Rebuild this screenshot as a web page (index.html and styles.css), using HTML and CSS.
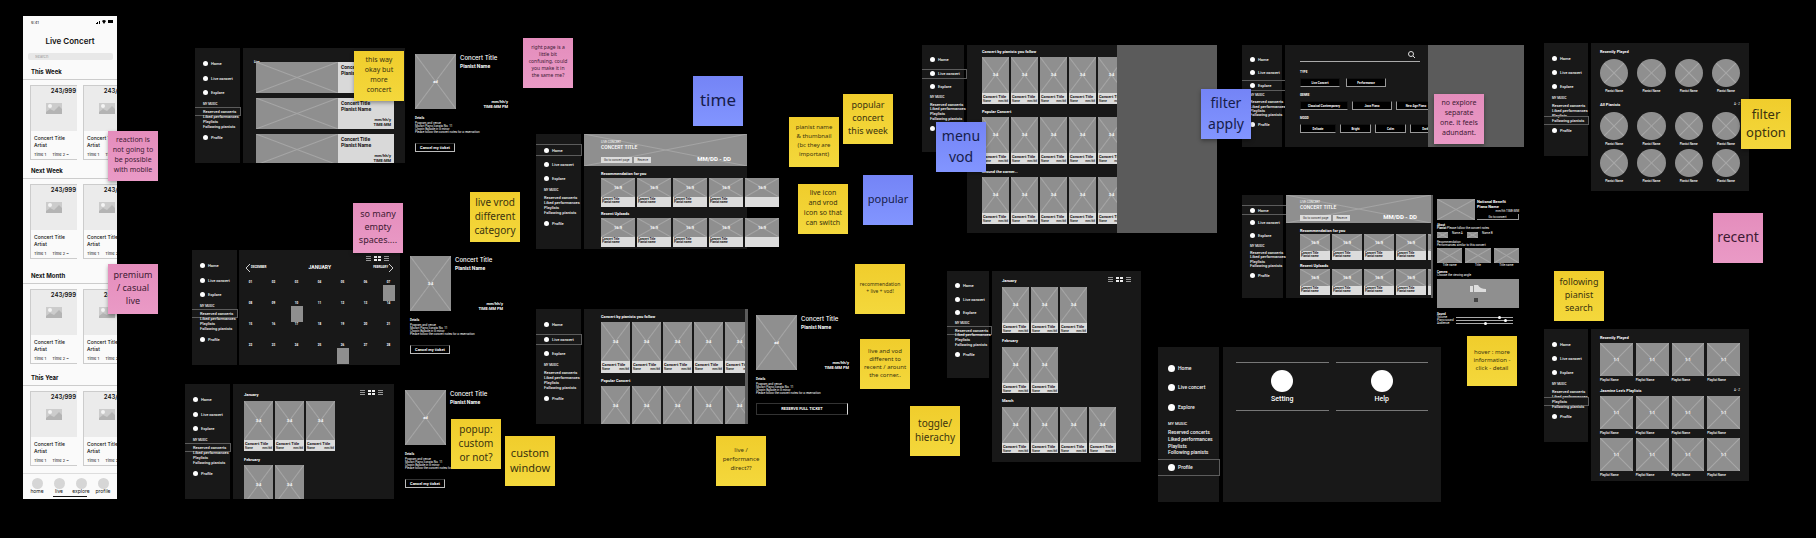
FILE: index.html
```html
<!DOCTYPE html>
<html lang="en">
<head>
<meta charset="utf-8">
<title>Live Concert wireframes</title>
<link rel="stylesheet" href="styles.css">
</head>
<body>
<svg class="defs" aria-hidden="true">
  <symbol id="pic" viewBox="0 0 16 11"><path fill="#ccc" d="M0 0h16v11H0z"/><circle cx="4" cy="3" r="2" fill="#f4f4f4"/><path fill="#b4b4b4" d="M0 9l4-3 4 2 5-5 3 3v5H0z"/></symbol>
  <symbol id="views" viewBox="0 0 23 5"><path fill="#999" d="M0 0h5v1H0zM0 2h5v1H0zM0 4h5v1H0zM18 0h5v1h-5zM18 2h5v1h-5zM18 4h5v1h-5z"/><path fill="#eee" d="M8 0h3v2H8zM12 0h3v2h-3zM8 3h3v2H8zM12 3h3v2h-3z"/></symbol>
</svg>
<main class="board">

<section class="phone">
  <div class="status"><span>9:41</span><svg width="17" height="4" viewBox="0 0 17 4"><path d="M0 3h1v1H0zM1 2h1v2H1zM3 1h1v3H3zM6 1q2-2 4 0L8 4zM12 0h5v3h-5z"/></svg></div>
  <h1>Live Concert</h1>
  <input class="search" type="search" placeholder="Search" aria-label="Search concerts">
  <section class="week"><h2>This Week</h2><div class="tickets">
    <article class="ticket"><div><b>243/999</b><svg><use href="#pic"/></svg></div><h3>Concert Title<br>Artist</h3><p><span>Time 1</span><span>Time 2 ~</span></p></article>
    <article class="ticket"><div><b>243/999</b><svg><use href="#pic"/></svg></div><h3>Concert Title<br>Artist</h3><p><span>Time 1</span><span>Time 2 ~</span></p></article></div></section>
  <section class="week tight"><h2>Next Week</h2><div class="tickets">
    <article class="ticket"><div><b>243/999</b><svg><use href="#pic"/></svg></div><h3>Concert Title<br>Artist</h3><p><span>Time 1</span><span>Time 2 ~</span></p></article>
    <article class="ticket"><div><b>243/999</b><svg><use href="#pic"/></svg></div><h3>Concert Title<br>Artist</h3><p><span>Time 1</span><span>Time 2 ~</span></p></article></div></section>
  <section class="week loose"><h2>Next Month</h2><div class="tickets">
    <article class="ticket"><div><b>243/999</b><svg><use href="#pic"/></svg></div><h3>Concert Title<br>Artist</h3><p><span>Time 1</span><span>Time 2 ~</span></p></article>
    <article class="ticket"><div><b>243/999</b><svg><use href="#pic"/></svg></div><h3>Concert Title<br>Artist</h3><p><span>Time 1</span><span>Time 2 ~</span></p></article></div></section>
  <section class="week"><h2>This Year</h2><div class="tickets">
    <article class="ticket"><div><b>243/999</b><svg><use href="#pic"/></svg></div><h3>Concert Title<br>Artist</h3><p><span>Time 1</span><span>Time 2 ~</span></p></article>
    <article class="ticket"><div><b>243/999</b><svg><use href="#pic"/></svg></div><h3>Concert Title<br>Artist</h3><p><span>Time 1</span><span>Time 2 ~</span></p></article></div></section>
  <nav class="tabs"><a href="#">home</a><a href="#">live</a><a href="#">explore</a><a href="#">profile</a></nav>
</section>

<section class="group list">
  <nav class="side"><a class="nav" href="#">Home</a><a class="nav" href="#">Live concert</a><a class="nav" href="#">Explore</a><small>MY MUSIC</small><a class="on" href="#">Reserved concerts</a><a href="#">Liked performances</a><a href="#">Playlists</a><a href="#">Following pianists</a><a class="nav" href="#">Profile</a></nav>
  <div class="screen">
    <h3>Live</h3>
    <article class="strip"><div class="ph"></div><div><b>Concert Title<br>Pianist Name</b><span>mm/hh/y<br>TIME:MM</span></div></article>
    <article class="strip"><div class="ph"></div><div><b>Concert Title<br>Pianist Name</b><span>mm/hh/y<br>TIME:MM</span></div></article>
    <article class="strip"><div class="ph"></div><div><b>Concert Title<br>Pianist Name</b><span>mm/hh/y<br>TIME:MM</span></div></article>
  </div>
  <aside class="detail"><div class="top"><div class="ph">ad</div><div><h2>Concert Title</h2><h3>Pianist Name</h3><span>mm/hh/y<br>TIME:MM PM</span></div></div><h4>Details</h4><p>Program and venue<br>Mozart Piano Sonata No. 11<br>Chopin Ballade in G minor<br>Please follow the concert notes for a reservation</p><button>Cancel my ticket</button></aside>
</section>

<section class="group month">
  <nav class="side"><a class="nav" href="#">Home</a><a class="nav" href="#">Live concert</a><a class="nav" href="#">Explore</a><small>MY MUSIC</small><a class="on" href="#">Reserved concerts</a><a href="#">Liked performances</a><a href="#">Playlists</a><a href="#">Following pianists</a><a class="nav" href="#">Profile</a></nav>
  <div class="screen">
    <svg class="views"><use href="#views"/></svg>
    <div class="months"><button><svg width="4" height="8" viewBox="0 0 4 8"><path d="M4 0L0 4l4 4"/></svg>DECEMBER</button><h2>JANUARY</h2><button>FEBRUARY<svg width="4" height="8" viewBox="0 0 4 8"><path d="M0 0l4 4-4 4"/></svg></button></div>
    <div class="days"><span>01</span><span>02</span><span>03</span><span>04</span><span>05</span><span>06</span><span class="ev">07</span><span>08</span><span>09</span><span class="ev">10</span><span>11</span><span>12</span><span>13</span><span>14</span><span>15</span><span>16</span><span>17</span><span>18</span><span>19</span><span>20</span><span>21</span><span>22</span><span>23</span><span>24</span><span>25</span><span class="ev">26</span><span>27</span><span>28</span></div>
  </div>
  <aside class="detail"><div class="top"><div class="ph">3:4</div><div><h2>Concert Title</h2><h3>Pianist Name</h3><span>mm/hh/y<br>TIME:MM PM</span></div></div><h4>Details</h4><p>Program and venue<br>Mozart Piano Sonata No. 11<br>Chopin Ballade in G minor<br>Please follow the concert notes for a reservation</p><button>Cancel my ticket</button></aside>
</section>

<section class="group monthly">
  <nav class="side"><a class="nav" href="#">Home</a><a class="nav" href="#">Live concert</a><a class="nav" href="#">Explore</a><small>MY MUSIC</small><a class="on" href="#">Reserved concerts</a><a href="#">Liked performances</a><a href="#">Playlists</a><a href="#">Following pianists</a><a class="nav" href="#">Profile</a></nav>
  <div class="screen">
    <header><h3>January</h3><svg class="views"><use href="#views"/></svg></header>
    <div class="row">
      <article class="card"><div class="ph">3:4</div><h4>Concert Title</h4><p><span>Name</span><span>mm/dd</span></p></article>
      <article class="card"><div class="ph">3:4</div><h4>Concert Title</h4><p><span>Name</span><span>mm/dd</span></p></article>
      <article class="card"><div class="ph">3:4</div><h4>Concert Title</h4><p><span>Name</span><span>mm/dd</span></p></article>
    </div>
    <h3>February</h3>
    <div class="row">
      <article class="card"><div class="ph">3:4</div><h4>Concert Title</h4><p><span>Name</span><span>mm/dd</span></p></article>
      <article class="card"><div class="ph">3:4</div><h4>Concert Title</h4><p><span>Name</span><span>mm/dd</span></p></article>
    </div>
  </div>
  <aside class="detail"><div class="top"><div class="ph">ad</div><div><h2>Concert Title</h2><h3>Pianist Name</h3></div></div><h4>Details</h4><p>Program and venue<br>Mozart Piano Sonata No. 11<br>Chopin Ballade in G minor<br>Please follow the concert notes for a reservation</p><button>Cancel my ticket</button></aside>
</section>

<section class="group home">
  <nav class="side"><a class="nav on" href="#">Home</a><a class="nav" href="#">Live concert</a><a class="nav" href="#">Explore</a><small>MY MUSIC</small><a href="#">Reserved concerts</a><a href="#">Liked performances</a><a href="#">Playlists</a><a href="#">Following pianists</a><a class="nav" href="#">Profile</a></nav>
  <div class="screen">
    <div class="banner"><div><small>LIVE CONCERT</small><h2>CONCERT TITLE</h2><button>Go to concert page</button><button>Reserve</button></div><b>MM/DD - DD</b></div>
    <h3>Recommendation for you</h3>
    <div class="row">
      <article class="card"><div class="ph">16:9</div><h4>Concert Title</h4><h4>Pianist name</h4></article>
      <article class="card"><div class="ph">16:9</div><h4>Concert Title</h4><h4>Pianist name</h4></article>
      <article class="card"><div class="ph">16:9</div><h4>Concert Title</h4><h4>Pianist name</h4></article>
      <article class="card"><div class="ph">16:9</div><h4>Concert Title</h4><h4>Pianist name</h4></article>
      <article class="card"><div class="ph">16:9</div></article>
    </div>
    <h3>Recent Uploads</h3>
    <div class="row">
      <article class="card"><div class="ph">16:9</div><h4>Concert Title</h4><h4>Pianist name</h4></article>
      <article class="card"><div class="ph">16:9</div><h4>Concert Title</h4><h4>Pianist name</h4></article>
      <article class="card"><div class="ph">16:9</div><h4>Concert Title</h4><h4>Pianist name</h4></article>
      <article class="card"><div class="ph">16:9</div><h4>Concert Title</h4><h4>Pianist name</h4></article>
      <article class="card"><div class="ph">16:9</div></article>
    </div>
  </div>
</section>

<section class="group live">
  <nav class="side"><a class="nav" href="#">Home</a><a class="nav on" href="#">Live concert</a><a class="nav" href="#">Explore</a><small>MY MUSIC</small><a href="#">Reserved concerts</a><a href="#">Liked performances</a><a href="#">Playlists</a><a href="#">Following pianists</a><a class="nav" href="#">Profile</a></nav>
  <div class="screen">
    <h3>Concert by pianists you follow</h3>
    <div class="row">
      <article class="card"><div class="ph">3:4</div><h4>Concert Title</h4><p><span>Name</span><span>mm/dd</span></p></article>
      <article class="card"><div class="ph">3:4</div><h4>Concert Title</h4><p><span>Name</span><span>mm/dd</span></p></article>
      <article class="card"><div class="ph">3:4</div><h4>Concert Title</h4><p><span>Name</span><span>mm/dd</span></p></article>
      <article class="card"><div class="ph">3:4</div><h4>Concert Title</h4><p><span>Name</span><span>mm/dd</span></p></article>
      <article class="card"><div class="ph">3:4</div><h4>Concert Title</h4><p><span>Name</span><span>mm/dd</span></p></article>
    </div>
    <h3>Popular Concert</h3>
    <div class="row">
      <article class="card"><div class="ph">3:4</div></article>
      <article class="card"><div class="ph">3:4</div></article>
      <article class="card"><div class="ph">3:4</div></article>
      <article class="card"><div class="ph">3:4</div></article>
      <article class="card"><div class="ph">3:4</div></article>
    </div>
  </div>
  <aside class="detail"><div class="top"><div class="ph">ad</div><div><h2>Concert Title</h2><h3>Pianist Name</h3><span>mm/hh/y<br>TIME:MM PM</span></div></div><h4>Details</h4><p>Program and venue<br>Mozart Piano Sonata No. 11<br>Chopin Ballade in G minor<br>Please follow the concert notes for a reservation</p><button>RESERVE FULL TICKET</button></aside>
</section>

<section class="group vod">
  <nav class="side"><a class="nav" href="#">Home</a><a class="nav on" href="#">Live concert</a><a class="nav" href="#">Explore</a><small>MY MUSIC</small><a href="#">Reserved concerts</a><a href="#">Liked performances</a><a href="#">Playlists</a><a href="#">Following pianists</a><a class="nav" href="#">Profile</a></nav>
  <div class="screen">
    <h3>Concert by pianists you follow</h3>
    <div class="row">
      <article class="card"><div class="ph">3:4</div><h4>Concert Title</h4><p><span>Name</span><span>mm/dd</span></p></article>
      <article class="card"><div class="ph">3:4</div><h4>Concert Title</h4><p><span>Name</span><span>mm/dd</span></p></article>
      <article class="card"><div class="ph">3:4</div><h4>Concert Title</h4><p><span>Name</span><span>mm/dd</span></p></article>
      <article class="card"><div class="ph">3:4</div><h4>Concert Title</h4><p><span>Name</span><span>mm/dd</span></p></article>
      <article class="card"><div class="ph">3:4</div><h4>Concert Title</h4><p><span>Name</span><span>mm/dd</span></p></article>
    </div>
    <h3>Popular Concert</h3>
    <div class="row">
      <article class="card"><div class="ph">3:4</div><h4>Concert Title</h4><p><span>Name</span><span>mm/dd</span></p></article>
      <article class="card"><div class="ph">3:4</div><h4>Concert Title</h4><p><span>Name</span><span>mm/dd</span></p></article>
      <article class="card"><div class="ph">3:4</div><h4>Concert Title</h4><p><span>Name</span><span>mm/dd</span></p></article>
      <article class="card"><div class="ph">3:4</div><h4>Concert Title</h4><p><span>Name</span><span>mm/dd</span></p></article>
      <article class="card"><div class="ph">3:4</div><h4>Concert Title</h4><p><span>Name</span><span>mm/dd</span></p></article>
    </div>
    <h3>Around the corner...</h3>
    <div class="row">
      <article class="card"><div class="ph">3:4</div><h4>Concert Title</h4><p><span>Name</span><span>mm/dd</span></p></article>
      <article class="card"><div class="ph">3:4</div><h4>Concert Title</h4><p><span>Name</span><span>mm/dd</span></p></article>
      <article class="card"><div class="ph">3:4</div><h4>Concert Title</h4><p><span>Name</span><span>mm/dd</span></p></article>
      <article class="card"><div class="ph">3:4</div><h4>Concert Title</h4><p><span>Name</span><span>mm/dd</span></p></article>
      <article class="card"><div class="ph">3:4</div><h4>Concert Title</h4><p><span>Name</span><span>mm/dd</span></p></article>
    </div>
  </div>
  <div class="panel"></div>
</section>

<section class="group toggle">
  <nav class="side"><a class="nav" href="#">Home</a><a class="nav" href="#">Live concert</a><a class="nav" href="#">Explore</a><small>MY MUSIC</small><a class="on" href="#">Reserved concerts</a><a href="#">Liked performances</a><a href="#">Playlists</a><a href="#">Following pianists</a><a class="nav" href="#">Profile</a></nav>
  <div class="screen">
    <header><h3>January</h3><svg class="views"><use href="#views"/></svg></header>
    <div class="row">
      <article class="card"><div class="ph">3:4</div><h4>Concert Title</h4><p><span>Name</span><span>mm/dd</span></p></article>
      <article class="card"><div class="ph">3:4</div><h4>Concert Title</h4><p><span>Name</span><span>mm/dd</span></p></article>
      <article class="card"><div class="ph">3:4</div><h4>Concert Title</h4><p><span>Name</span><span>mm/dd</span></p></article>
    </div>
    <h3>February</h3>
    <div class="row">
      <article class="card"><div class="ph">3:4</div><h4>Concert Title</h4><p><span>Name</span><span>mm/dd</span></p></article>
      <article class="card"><div class="ph">3:4</div><h4>Concert Title</h4><p><span>Name</span><span>mm/dd</span></p></article>
    </div>
    <h3>March</h3>
    <div class="row">
      <article class="card"><div class="ph">3:4</div><h4>Concert Title</h4><p><span>Name</span><span>mm/dd</span></p></article>
      <article class="card"><div class="ph">3:4</div><h4>Concert Title</h4><p><span>Name</span><span>mm/dd</span></p></article>
      <article class="card"><div class="ph">3:4</div><h4>Concert Title</h4><p><span>Name</span><span>mm/dd</span></p></article>
      <article class="card"><div class="ph">3:4</div><h4>Concert Title</h4><p><span>Name</span><span>mm/dd</span></p></article>
    </div>
  </div>
</section>

<section class="group explore">
  <nav class="side"><a class="nav" href="#">Home</a><a class="nav" href="#">Live concert</a><a class="nav on" href="#">Explore</a><small>MY MUSIC</small><a href="#">Reserved concerts</a><a href="#">Liked performances</a><a href="#">Playlists</a><a href="#">Following pianists</a><a class="nav" href="#">Profile</a></nav>
  <div class="screen">
    <label class="find"><input type="text" aria-label="Search"><svg width="7" height="7" viewBox="0 0 7 7"><circle cx="3" cy="3" r="2.5"/><path d="M5 5l2 2"/></svg></label>
    <h3>TYPE</h3>
    <div class="chips top-row"><button>Live Concert</button><button>Performance</button></div>
    <h3>GENRE</h3>
    <div class="chips mid"><button>Classical Contemporary</button><button>Jazz Piano</button><button>New Age Piano</button></div>
    <h3>MOOD</h3>
    <div class="chips low"><button>Delicate</button><button>Bright</button><button>Calm</button><button>Dark</button></div>
  </div>
  <div class="panel"></div>
</section>

<section class="group home small">
  <nav class="side"><a class="nav on" href="#">Home</a><a class="nav" href="#">Live concert</a><a class="nav" href="#">Explore</a><small>MY MUSIC</small><a href="#">Reserved concerts</a><a href="#">Liked performances</a><a href="#">Playlists</a><a href="#">Following pianists</a><a class="nav" href="#">Profile</a></nav>
  <div class="screen">
    <div class="banner"><div><small>LIVE CONCERT</small><h2>CONCERT TITLE</h2><button>Go to concert page</button><button>Reserve</button></div><b>MM/DD - DD</b></div>
    <h3>Recommendation for you</h3>
    <div class="row">
      <article class="card"><div class="ph">16:9</div><h4>Concert Title</h4><h4>Pianist name</h4></article>
      <article class="card"><div class="ph">16:9</div><h4>Concert Title</h4><h4>Pianist name</h4></article>
      <article class="card"><div class="ph">16:9</div><h4>Concert Title</h4><h4>Pianist name</h4></article>
      <article class="card"><div class="ph">16:9</div><h4>Concert Title</h4><h4>Pianist name</h4></article>
      <article class="card"><div class="ph"></div></article>
    </div>
    <h3>Recent Uploads</h3>
    <div class="row">
      <article class="card"><div class="ph">16:9</div><h4>Concert Title</h4><h4>Pianist name</h4></article>
      <article class="card"><div class="ph">16:9</div><h4>Concert Title</h4><h4>Pianist name</h4></article>
      <article class="card"><div class="ph">16:9</div><h4>Concert Title</h4><h4>Pianist name</h4></article>
      <article class="card"><div class="ph">16:9</div><h4>Concert Title</h4><h4>Pianist name</h4></article>
      <article class="card"><div class="ph"></div></article>
    </div>
  </div>
  <aside class="info">
    <div class="lead"><div class="ph"></div><div><b>National Benefit<br>Piano Name</b><span>mm/hh TIME:MM</span><button>Go to concert</button></div></div>
    <p><b>About<br>Pianist</b> Please follow the concert notes</p>
    <div class="people"><div class="ph"></div><span>Name A</span><div class="ph"></div><span>Name B</span></div>
    <p>Recommendation<br>Performances similar to this concert</p>
    <div class="thumbs"><figure><div class="ph"></div>Title name</figure><figure><div class="ph"></div>Title</figure><figure><div class="ph"></div>Title name</figure></div>
    <p><b>Camera</b><br>Choose the viewing angle</p>
    <div class="stage"><svg width="16" height="17" viewBox="0 0 16 17"><path fill="#ddd" d="M0 1h3v6H0zM4 0h4q2 4 8 4v3H4z"/><path fill="#444" d="M4 13h4v4H4z"/></svg></div>
    <p><b>Sound</b></p>
    <label>Volume<input type="range" value="78"></label>
    <label>Piano sound<input type="range" value="89"></label>
    <label>Audience<input type="range" value="52"></label>
  </aside>
</section>

<section class="group profile">
  <nav class="side"><a class="nav" href="#">Home</a><a class="nav" href="#">Live concert</a><a class="nav" href="#">Explore</a><small>MY MUSIC</small><a href="#">Reserved concerts</a><a href="#">Liked performances</a><a href="#">Playlists</a><a href="#">Following pianists</a><a class="nav on" href="#">Profile</a></nav>
  <div class="screen"><a class="choice" href="#">Setting</a><a class="choice" href="#">Help</a></div>
</section>

<section class="group pianists">
  <nav class="side"><a class="nav" href="#">Home</a><a class="nav" href="#">Live concert</a><a class="nav" href="#">Explore</a><small>MY MUSIC</small><a href="#">Reserved concerts</a><a href="#">Liked performances</a><a href="#">Playlists</a><a class="on" href="#">Following pianists</a><a class="nav" href="#">Profile</a></nav>
  <div class="screen">
    <h3>Recently Played</h3>
    <div class="tiles"><figure><div class="ph"></div>Pianist Name</figure><figure><div class="ph"></div>Pianist Name</figure><figure><div class="ph"></div>Pianist Name</figure><figure><div class="ph"></div>Pianist Name</figure></div>
    <header><h3>All Pianists</h3><small>A - Z</small></header>
    <div class="tiles"><figure><div class="ph"></div>Pianist Name</figure><figure><div class="ph"></div>Pianist Name</figure><figure><div class="ph"></div>Pianist Name</figure><figure><div class="ph"></div>Pianist Name</figure><figure><div class="ph"></div>Pianist Name</figure><figure><div class="ph"></div>Pianist Name</figure><figure><div class="ph"></div>Pianist Name</figure><figure><div class="ph"></div>Pianist Name</figure></div>
  </div>
</section>

<section class="group playlists">
  <nav class="side"><a class="nav" href="#">Home</a><a class="nav" href="#">Live concert</a><a class="nav" href="#">Explore</a><small>MY MUSIC</small><a href="#">Reserved concerts</a><a href="#">Liked performances</a><a class="on" href="#">Playlists</a><a href="#">Following pianists</a><a class="nav" href="#">Profile</a></nav>
  <div class="screen">
    <h3>Recently Played</h3>
    <div class="tiles"><figure><div class="ph">1:1</div>Playlist Name</figure><figure><div class="ph">1:1</div>Playlist Name</figure><figure><div class="ph">1:1</div>Playlist Name</figure><figure><div class="ph">1:1</div>Playlist Name</figure></div>
    <header><h3>Jasmine Lee's Playlists</h3><small>A - Z</small></header>
    <div class="tiles"><figure><div class="ph">1:1</div>Playlist Name</figure><figure><div class="ph">1:1</div>Playlist Name</figure><figure><div class="ph">1:1</div>Playlist Name</figure><figure><div class="ph">1:1</div>Playlist Name</figure><figure><div class="ph">1:1</div>Playlist Name</figure><figure><div class="ph">1:1</div>Playlist Name</figure><figure><div class="ph">1:1</div>Playlist Name</figure><figure><div class="ph">1:1</div>Playlist Name</figure></div>
  </div>
</section>

<p class="note pink t7 n1">reaction is<br>not going to<br>be possible<br>with mobile</p>
<p class="note pink t9 n2">premium<br>/ casual<br>live</p>
<p class="note yellow t7 n3">this way<br>okay but<br>more<br>concert</p>
<p class="note pink t5 n4">right page is a<br>little bit<br>confusing, could<br>you make it in<br>the same me?</p>
<p class="note blue t17 n5">time</p>
<p class="note yellow t6 airy n6">pianist name<br>&amp; thumbnail<br>(bc they are<br>important)</p>
<p class="note yellow t9 n7">popular<br>concert<br>this week</p>
<p class="note yellow t7 n8">live icon<br>and vrod<br>icon so that<br>can switch</p>
<p class="note blue t11 n9">popular</p>
<p class="note yellow t10 n10">live vrod<br>different<br>category</p>
<p class="note pink t9 n11">so many<br>empty<br>spaces....</p>
<p class="note yellow t10 n12">popup:<br>custom<br>or not?</p>
<p class="note yellow t11 n13">custom<br>window</p>
<p class="note yellow t5 n14">recommendation<br>+ live + vod!</p>
<p class="note yellow t6 n15">live and vod<br>different to<br>recent / arount<br>the corner..</p>
<p class="note yellow t6 airy n16">live /<br>performance<br>direct??</p>
<p class="note yellow t10 n17">toggle/<br>hierachy</p>
<p class="note blue t14 n18">menu<br>vod</p>
<p class="note blue t14 n19">filter<br>apply</p>
<p class="note pink t7 n20">no explore<br>separate<br>one. it feels<br>adundant.</p>
<p class="note yellow t13 n21">filter<br>option</p>
<p class="note pink t14 n22">recent</p>
<p class="note yellow t9 n23">following<br>pianist<br>search</p>
<p class="note yellow t6 n24">hover : more<br>information -<br>click - detail</p>
</main>
</body>
</html>
```
FILE: styles.css
```css
* { box-sizing: border-box; margin: 0; padding: 0; }
body { background: #000; color: #fff; font-family: Roboto, "Liberation Sans", sans-serif; }
a { color: inherit; text-decoration: none; }
h1, h2, h3, h4 { font-weight: 700; }
button { font: inherit; color: inherit; border: 0; background: none; white-space: nowrap; }
.defs { display: none; }
.board { position: relative; min-height: 100vh; overflow: hidden; }

/* Sticky notes */
.note {
  position: absolute; width: 50px; height: 50px;
  display: grid; place-content: center; padding-bottom: 3px;
  font-family: "Noto Sans", "Open Sans", sans-serif; text-align: center; white-space: nowrap;
  box-shadow: 0 2px 4px rgba(0, 0, 0, .35);
}
.yellow { background: linear-gradient(#f0cd2c, #f4d83c); color: #3a330f; }
.pink { background: linear-gradient(#e48dbc, #ea9ac6); color: #3d1a33; }
.blue { background: linear-gradient(#7484f6, #8295ff); color: #161c4a; }
.t5 { font-size: 5px; line-height: 7px; }
.t6 { font-size: 6px; line-height: 8px; }
.t6.airy { line-height: 9px; }
.t7 { font-size: 7px; line-height: 10px; }
.t9 { font-size: 9px; line-height: 13px; }
.t10 { font-size: 10px; line-height: 14px; }
.t11 { font-size: 11px; line-height: 15px; }
.t13 { font-size: 13px; line-height: 18px; }
.t14 { font-size: 14px; line-height: 21px; }
.t17 { font-size: 17px; line-height: 23px; }
.n1 { left: 108px; top: 131px; }
.n2 { left: 108px; top: 264px; }
.n3 { left: 354px; top: 51px; }
.n4 { left: 523px; top: 38px; }
.n5 { left: 693px; top: 76px; }
.n6 { left: 789px; top: 117px; }
.n7 { left: 843px; top: 94px; }
.n8 { left: 798px; top: 184px; }
.n9 { left: 863px; top: 175px; }
.n10 { left: 470px; top: 192px; }
.n11 { left: 353px; top: 203px; }
.n12 { left: 451px; top: 419px; }
.n13 { left: 505px; top: 436px; }
.n14 { left: 855px; top: 264px; }
.n15 { left: 860px; top: 339px; }
.n16 { left: 716px; top: 436px; }
.n17 { left: 910px; top: 406px; }
.n18 { left: 936px; top: 122px; }
.n19 { left: 1201px; top: 89px; }
.n20 { left: 1434px; top: 94px; }
.n21 { left: 1741px; top: 99px; }
.n22 { left: 1713px; top: 213px; }
.n23 { left: 1554px; top: 271px; }
.n24 { left: 1467px; top: 336px; }

/* Phone */
.phone {
  position: absolute; left: 23px; top: 16px; width: 94px; overflow: hidden;
  background: #fafafa; color: #111; font-family: Inter, Roboto, sans-serif; font-size: 4px;
}
.status { display: flex; justify-content: space-between; align-items: center; height: 12px; padding: 0 4px 0 8px; }
.phone h1 { font-size: 8px; line-height: 14px; font-weight: 600; text-align: center; margin: 6px 0 5px; }
.search { display: block; width: 85px; height: 7px; margin: 0 5px 4px; padding: 0 7px; border: 0; border-radius: 2px; background: #e8e8e8; font: 4px Inter, sans-serif; }
.search::placeholder { color: #999; }
.week h2 { font-size: 6px; line-height: 15px; padding-left: 8px; border-bottom: 1px solid #ccc; }
.week + .week { margin-top: 6px; }
.week + .tight { margin-top: 3px; }
.week + .loose { margin-top: 9px; }
.tickets { display: flex; gap: 6px; padding: 5px 0 0 7px; }
.ticket { flex: none; width: 47px; height: 75px; border: 1px solid #ccc; border-width: 1px 0 1px 1px; }
.ticket div { display: flex; flex-direction: column; align-items: center; height: 45px; background: #ebebeb; }
.ticket b { align-self: flex-end; padding-right: 1px; font-size: 6px; line-height: 10px; font-weight: 600; }
.ticket svg { width: 16px; height: 11px; margin-top: 7px; }
.ticket h3 { padding: 4px 0 0 3px; font-size: 5px; line-height: 7px; font-weight: 500; }
.ticket p { display: flex; gap: 6px; padding: 2px 0 0 3px; line-height: 8px; white-space: nowrap; }
.tabs { display: flex; justify-content: space-between; height: 26px; margin-top: 7px; padding: 4px 6px 0; border-top: 1px solid #ddd; background: linear-gradient(#111, #111) center bottom 2px / 34px 1px no-repeat; }
.tabs a { display: flex; flex-direction: column; align-items: center; width: 16px; line-height: 5px; font-size: 5px; }
.tabs a::before { content: ""; flex: none; width: 11px; height: 11px; border-radius: 50%; background: #d6d6d6; }

/* Screen groups */
.group { position: absolute; display: flex; align-items: flex-start; gap: 3px; font-size: 4px; line-height: 5px; white-space: nowrap; }
.screen { flex: none; height: 115px; background: #181818; overflow: hidden; }
.screen h3 { font-size: 4px; line-height: 6px; }
.screen header { display: flex; justify-content: space-between; align-items: flex-start; }
.screen small { font-size: 3px; }
.views { display: block; width: 23px; height: 5px; }
.panel { width: 100px; align-self: stretch; margin-left: -3px; background: #5b5b5b; }
.ph {
  display: grid; place-content: center; font-size: 4px; font-weight: 700; color: #fff;
  background:
    linear-gradient(to top right, transparent calc(50% - 1px), #a6a6a6 50%, transparent calc(50% + 1px)),
    linear-gradient(to bottom right, transparent calc(50% - 1px), #a6a6a6 50%, transparent calc(50% + 1px)),
    #8f8f8f;
}

/* Sidebar */
.side {
  flex: none; display: grid; width: 45px; height: 115px; background: #181818; color: #f4f4f4;
  grid-template-rows: minmax(0, 15fr) minmax(0, 14fr) minmax(0, 15fr) minmax(0, 9fr) repeat(4, minmax(0, 5fr)) minmax(0, 17fr) minmax(0, 17fr);
  padding-top: 8px; font-weight: 500;
}
.side a, .side small { display: flex; align-items: center; padding-left: 8px; }
.side small { font-size: 3px; }
.side .nav { gap: 3px; }
.side .nav::before { content: ""; width: 5px; height: 5px; border-radius: 50%; background: #fff; }
.side .on { margin: -2px -1px -2px 0; border: 1px solid #5c5c5c; border-left: 0; }
.side .nav.on { margin: 2px -1px 1px 0; }
.side .nav.on:nth-child(9) { margin: 3px -1px 3px 0; }

/* Cards */
.row { display: flex; gap: 2px; height: 50px; }
.card { flex: none; display: flex; flex-direction: column; width: 29px; background: #dcdcdc; color: #111; line-height: 4px; }
.card .ph { height: 39px; margin-bottom: 1px; }
.card h4 { padding: 0 1px; font-size: 4px; line-height: 5px; }
.card p { display: flex; justify-content: space-between; padding: 0 1px; font-size: 3px; font-weight: 500; }

/* Concert detail */
.detail { width: 93px; margin: 6px 0 0 7px; }
.detail .top { display: flex; gap: 4px; height: 55px; }
.detail .ph { flex: none; width: 41px; }
.detail .top > div + div { display: flex; flex-direction: column; flex: 1; }
.detail h2 { font: 500 6px/8px Inter, sans-serif; }
.detail h3 { font-size: 5px; line-height: 8px; }
.detail span { margin: auto 0 0; text-align: right; font-weight: 700; }
.detail h4 { margin-top: 6px; font-size: 3px; line-height: 6px; }
.detail p { margin: 1px 0 9px; font-size: 3px; line-height: 3px; }
.detail button { height: 9px; width: 40px; border: 1px solid #bbb; border-top-color: #333; font-weight: 700; line-height: 6px; }

/* List */
.list { left: 195px; top: 48px; }
.list .screen { width: 162px; padding: 11px 11px 0 13px; display: flex; flex-direction: column; gap: 5px; }
.list .screen h3 { margin: 0 0 -8px -2px; font-size: 3px; }
.strip { flex: none; display: flex; height: 31px; background: #d9d9d9; color: #111; }
.strip .ph { width: 82px; }
.strip > div + div { flex: 1; display: flex; flex-direction: column; justify-content: space-between; padding: 2px 3px; }
.strip b { font-size: 5px; line-height: 6px; }
.strip span { text-align: right; font-weight: 700; line-height: 5px; }

/* Calendar */
.month { left: 192px; top: 250px; gap: 2px; }
.month .screen { width: 161px; padding-top: 6px; }
.month .views { margin: 0 11px 2px auto; }
.months { display: flex; justify-content: space-between; align-items: center; height: 9px; padding: 0 7px; font-size: 3px; }
.months button { display: flex; align-items: center; gap: 1px; font-weight: 700; }
.months h2 { font-size: 5px; }
.months svg { fill: none; stroke: #ccc; }
.days { display: grid; grid-template-columns: repeat(7, 1fr); grid-auto-rows: 21px; padding-top: 8px; text-align: center; font-size: 3px; font-weight: 700; line-height: 5px; }
.ev::after { content: ""; display: block; width: 12px; height: 16px; margin: 0 auto; background: #8f8f8f; }
.month .detail, .monthly .detail { margin-left: 8px; }

/* Monthly posters */
.monthly { left: 185px; top: 384px; }
.monthly .screen { width: 161px; padding: 6px 11px 0; }
.monthly header { height: 11px; }
.monthly header h3 { padding-top: 2px; }
.monthly .row + h3 { margin: 6px 0 2px; }

/* Home */
.home { left: 536px; top: 134px; }
.home .screen { width: 163px; overflow: visible; }
.banner {
  display: flex; justify-content: space-between; align-items: flex-end; height: 32px; margin-bottom: 5px; padding: 0 16px 3px 17px;
  background:
    linear-gradient(to top right, transparent calc(50% - 1px), #a4a4a4 50%, transparent calc(50% + 1px)),
    linear-gradient(to bottom right, transparent calc(50% - 1px), #a4a4a4 50%, transparent calc(50% + 1px)),
    #8f8f8f;
}
.banner small { display: block; line-height: 4px; }
.banner h2 { font-size: 5px; line-height: 6px; margin-bottom: 7px; font-weight: 500; }
.banner button { margin-right: 2px; padding: 0 3px; background: #dcdcdc; color: #333; font-size: 3px; line-height: 6px; }
.banner b { font-size: 6px; line-height: 8px; }
.home .screen h3, .home .row { margin-left: 17px; }
.home .row { height: 29px; margin-top: 1px; margin-bottom: 4px; }
.home .card { width: 34px; }
.home .card .ph { height: 19px; }
.home .card h4 { font-size: 3px; line-height: 3px; }

/* Live concert */
.live { left: 536px; top: 309px; }
.live .screen { width: 164px; padding: 5px 0 0 17px; border-right: 3px solid #5b5b5b; }
.live .row { height: 51px; margin: 2px 0 5px; }
.live .detail { margin-left: 5px; }
.live .detail p { margin-bottom: 8px; }
.live .detail button { width: 92px; height: 12px; border-color: #333 #ddd #333 #333; }

/* VOD */
.vod { left: 922px; top: 45px; }
.vod .side, .toggle .side { width: 42px; height: 107px; }
.vod .screen { width: 150px; height: 188px; padding: 4px 0 0 15px; }
.vod .row { height: 47px; margin: 2px 0 5px; }
.vod .card, .toggle .card { width: 27px; }
.vod .card .ph, .toggle .card .ph { height: 36px; }

/* Toggle */
.toggle { left: 947px; top: 271px; }
.toggle .screen { width: 149px; height: 191px; padding: 6px 10px 0; }
.toggle header h3 { padding-top: 1px; }
.toggle .row { height: 46px; margin: 3px 0 5px; }

/* Explore */
.explore { left: 1242px; top: 45px; }
.explore .side { width: 40px; height: 102px; }
.explore .screen { width: 143px; height: 102px; padding: 6px 0 0 15px; }
.explore .panel { width: 96px; }
.find { display: flex; width: 120px; height: 11px; margin-bottom: 8px; padding-right: 5px; border-bottom: 1px solid #aaa; }
.find input { flex: 1; min-width: 0; border: 0; background: none; color: #fff; font-size: 6px; }
.find svg { fill: none; stroke: #ddd; }
.explore .screen h3 { font-size: 3px; line-height: 5px; }
.chips { display: flex; gap: 4px; margin: 3px 0 6px; }
.chips button { flex: none; width: 40px; height: 9px; background: #000; border: 1px solid #111; border-bottom-color: #999; font-size: 3px; font-weight: 700; line-height: 6px; }
.chips button + button { border-left-color: #999; border-right-color: #999; }
.top-row { gap: 6px; }
.mid button:first-child { width: 48px; }
.low button { width: 31px; border-left-color: #999; }
.low button:first-child { width: 36px; }

/* Compact home with info column */
.small { left: 1242px; top: 195px; }
.small .side { width: 41px; height: 103px; }
.small .screen { width: 147px; height: 103px; overflow: hidden; border-right: 2px solid #5b5b5b; }
.small .banner { height: 28px; padding: 0 14px 2px 14px; }
.small .banner h2 { margin-bottom: 5px; }
.small .screen h3, .small .row { margin-left: 14px; }
.small .row { height: 26px; margin-top: 0; margin-bottom: 3px; }
.small .card { width: 30px; }
.small .card .ph { height: 17px; }
.info { width: 82px; margin: 4px 0 0 1px; font-size: 3px; line-height: 3px; }
.lead { display: flex; gap: 2px; height: 21px; margin-bottom: 4px; }
.lead .ph { width: 38px; }
.lead > div + div { flex: 1; display: flex; flex-direction: column; justify-content: space-between; }
.lead b { font-size: 4px; line-height: 5px; }
.lead span { text-align: right; }
.lead button { height: 6px; border: 1px solid #999; border-top: 0; border-left: 0; line-height: 4px; }
.people { display: flex; gap: 4px; height: 6px; margin: 2px 0 3px; }
.people .ph { width: 11px; }
.people span { width: 11px; }
.thumbs { display: flex; gap: 3px; margin: 1px 0 4px; text-align: center; line-height: 4px; }
.thumbs figure { flex: 1; }
.thumbs .ph { height: 15px; }
.stage { display: grid; place-items: center; height: 29px; margin: 2px 0 5px; background: #8f8f8f; }
.info label { display: flex; justify-content: space-between; align-items: center; height: 3px; padding-right: 6px; }
.info input { appearance: none; width: 57px; height: 1px; background: #aaa; }
.info input::-webkit-slider-thumb { appearance: none; width: 3px; height: 3px; border-radius: 50%; background: #fff; }

/* Profile */
.profile { left: 1158px; top: 347px; gap: 4px; }
.profile .side { width: 61px; height: 155px; padding-top: 11px; font-size: 5px; }
.profile .side a, .profile .side small { padding-left: 10px; }
.profile .side small { font-size: 4px; }
.profile .side .nav::before { width: 7px; height: 7px; }
.profile .screen { display: flex; align-items: flex-start; gap: 7px; width: 218px; height: 155px; padding: 15px 13px; }
.choice { flex: 1; display: flex; flex-direction: column; align-items: center; gap: 3px; height: 49px; padding-top: 7px; border: 1px solid #777; border-width: 1px 0; font: 500 7px/9px Roboto, sans-serif; }
.choice::before { content: ""; width: 22px; height: 22px; border-radius: 50%; background: #fff; }

/* Pianists and playlists */
.pianists { left: 1544px; top: 43px; }
.playlists { left: 1544px; top: 329px; }
.pianists .side, .playlists .side { width: 44px; height: 113px; }
.pianists .screen { width: 158px; height: 148px; padding: 6px 9px 0; }
.playlists .screen { width: 158px; height: 152px; padding: 6px 9px 0; }
.tiles { display: grid; grid-template-columns: repeat(4, 1fr); gap: 1px 3px; margin: 2px 0 4px; font-size: 3px; font-weight: 500; line-height: 8px; }
.tiles .ph { height: 33px; }
.pianists .tiles { gap: 1px 9px; margin: 4px 0 7px; text-align: center; }
.pianists .tiles .ph { height: 28px; border-radius: 50%; }
```
